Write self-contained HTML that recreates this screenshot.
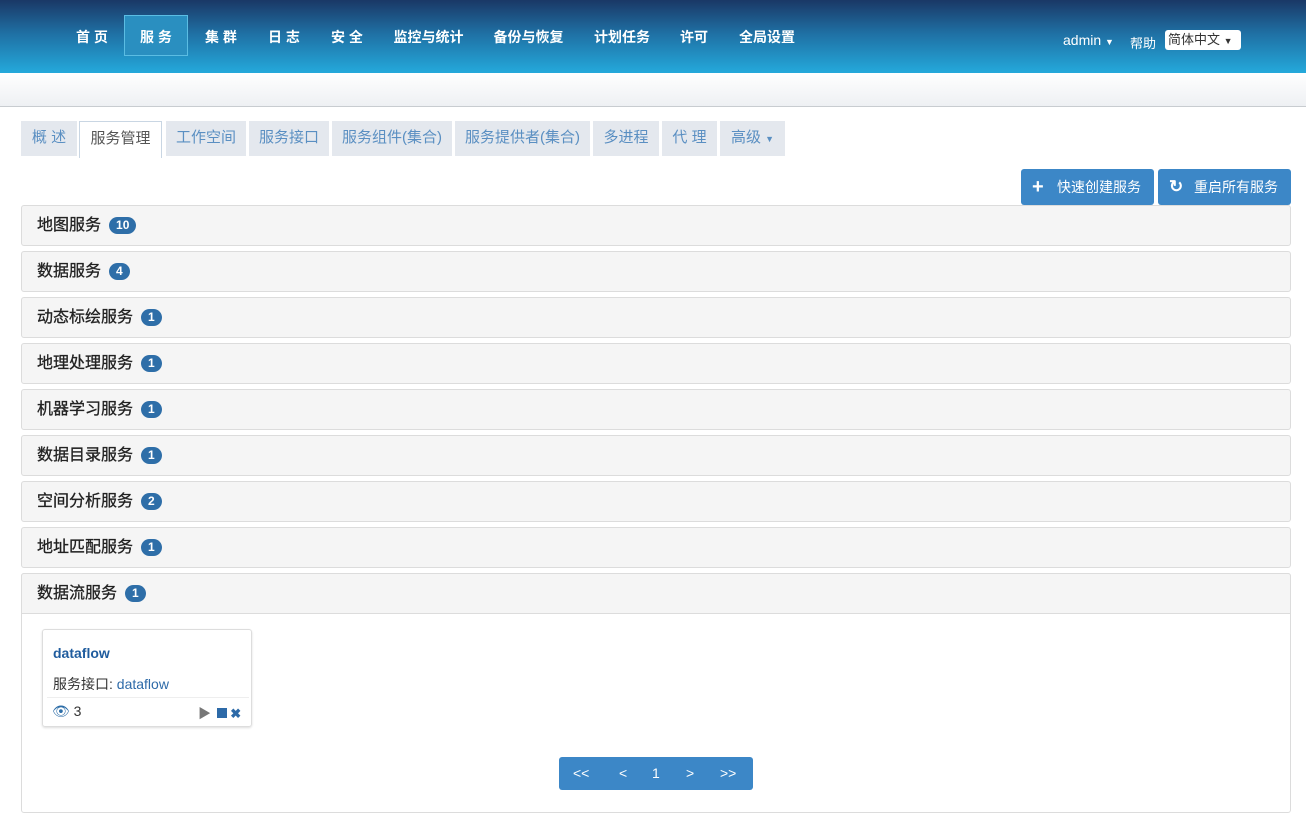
<!DOCTYPE html><html><head><meta charset="utf-8"><style>
*{box-sizing:border-box;margin:0;padding:0}
body{width:1306px;height:798px;overflow:hidden;background:#fff;font-family:"Liberation Sans","Noto Sans CJK SC",sans-serif;font-size:14px;color:#333;position:relative}
.hd{position:absolute;left:0;top:0;width:1306px;height:73px;background:linear-gradient(#1a3866,#1f6fa3 45%,#24a9db)}
.nav a{position:absolute;top:17px;height:40px;line-height:40px;color:#fff;font-weight:bold;font-size:14px;text-align:center}
.nav a.act{top:15px;height:41px;line-height:42px;background:#2a8fc0;border:1px solid #5bbde3}
.sub{position:absolute;top:73px;left:0;width:1306px;height:34px;background:linear-gradient(#fff,#eef0f3);border-bottom:1px solid #c8ccd0}
.tab{position:absolute;top:121px;height:35px;line-height:34px;background:#e4e8ee;color:#5a8fc2;font-size:15px;text-align:center}
.tab.act{background:#fff;border:1px solid #c9d6e3;border-bottom:none;height:37px;color:#555}
.btn{position:absolute;top:169px;height:36px;line-height:36px;background:#3c87c7;border-radius:3px;color:#fff;font-size:14px;padding-left:36px}
.pn{position:absolute;left:21px;width:1270px;height:41px;background:#f5f5f5;border:1px solid #dcdcdc;border-radius:3px;font-size:16px;color:#222;padding-left:15px;line-height:39px;-webkit-text-stroke:0.3px #222}
.bd{display:inline-block;background:#2e6ea8;color:#fff;font-size:12px;font-weight:bold;border-radius:10px;padding:0 7px;line-height:17px;margin-left:8px;vertical-align:1px;-webkit-text-stroke:0}
</style></head><body>
<div class="hd"></div>
<div class="nav">
<a style="left:64px;width:56px">首 页</a>
<a class="act" style="left:124px;width:64px">服 务</a>
<a style="left:192px;width:58px">集 群</a>
<a style="left:255px;width:58px">日 志</a>
<a style="left:318px;width:58px">安 全</a>
<a style="left:385px;width:87px">监控与统计</a>
<a style="left:485px;width:87px">备份与恢复</a>
<a style="left:585px;width:74px">计划任务</a>
<a style="left:672px;width:44px">许可</a>
<a style="left:730px;width:74px">全局设置</a>
</div>
<div style="position:absolute;left:1063px;top:32px;color:#fff;font-size:14px">admin <span style="font-size:9px">▼</span></div>
<div style="position:absolute;left:1130px;top:33px;color:#fff;font-size:13px">帮助</div>
<div style="position:absolute;left:1165px;top:30px;width:76px;height:20px;background:#fff;border-radius:3px;font-size:13px;color:#333;line-height:20px;padding-left:3px">简体中文 <span style="font-size:9px">▼</span></div>
<div class="sub"></div>
<div class="tab" style="left:21px;width:56px">概 述</div>
<div class="tab act" style="left:79px;width:83px">服务管理</div>
<div class="tab" style="left:166px;width:80px">工作空间</div>
<div class="tab" style="left:249px;width:80px">服务接口</div>
<div class="tab" style="left:332px;width:120px">服务组件(集合)</div>
<div class="tab" style="left:455px;width:135px">服务提供者(集合)</div>
<div class="tab" style="left:593px;width:66px">多进程</div>
<div class="tab" style="left:662px;width:55px">代 理</div>
<div class="tab" style="left:720px;width:65px">高级 <span style="font-size:9px">▼</span></div>
<div class="btn" style="left:1021px;width:133px"><span style="position:absolute;left:11px;font-size:20px;font-weight:bold">+</span>快速创建服务</div>
<div class="btn" style="left:1158px;width:133px"><span style="position:absolute;left:11px;font-size:17px;font-weight:bold">↻</span>重启所有服务</div>
<div class="pn" style="top:205px">地图服务<span class="bd">10</span></div>
<div class="pn" style="top:251px">数据服务<span class="bd">4</span></div>
<div class="pn" style="top:297px">动态标绘服务<span class="bd">1</span></div>
<div class="pn" style="top:343px">地理处理服务<span class="bd">1</span></div>
<div class="pn" style="top:389px">机器学习服务<span class="bd">1</span></div>
<div class="pn" style="top:435px">数据目录服务<span class="bd">1</span></div>
<div class="pn" style="top:481px">空间分析服务<span class="bd">2</span></div>
<div class="pn" style="top:527px">地址匹配服务<span class="bd">1</span></div>
<div style="position:absolute;left:21px;top:573px;width:1270px;height:240px;border:1px solid #dcdcdc;border-radius:3px"></div>
<div class="pn" style="top:573px;border-bottom-left-radius:0;border-bottom-right-radius:0">数据流服务<span class="bd">1</span></div>
<div style="position:absolute;left:42px;top:629px;width:210px;height:98px;border:1px solid #ddd;border-radius:3px;box-shadow:0 1px 2px #ddd">
<div style="position:absolute;left:10px;top:15px;color:#1f5c9e;font-weight:bold;font-size:14px">dataflow</div>
<div style="position:absolute;left:10px;top:44px;font-size:14px">服务接口: <span style="color:#2d6aa8">dataflow</span></div>
<div style="position:absolute;left:4px;top:67px;width:202px;border-top:1px solid #eee"></div>
<div style="position:absolute;left:9px;top:73px;font-size:14px"><span style="color:#2e6ea8">👁</span> 3</div>
<div style="position:absolute;left:155px;top:73px;font-size:13px"><span style="color:#777">▶</span> <span style="display:inline-block;width:10px;height:10px;background:#2d6aa8;margin-left:2px"></span> <span style="color:#2d6aa8;font-weight:bold">✖</span></div>
</div>
<div style="position:absolute;left:559px;top:757px;width:194px;height:33px;background:#3c87c7;border-radius:3px;color:#fff;font-size:14px;line-height:33px">
<span style="position:absolute;left:14px">&lt;&lt;</span><span style="position:absolute;left:60px">&lt;</span><span style="position:absolute;left:93px">1</span><span style="position:absolute;left:127px">&gt;</span><span style="position:absolute;left:161px">&gt;&gt;</span></div>
</body></html>
